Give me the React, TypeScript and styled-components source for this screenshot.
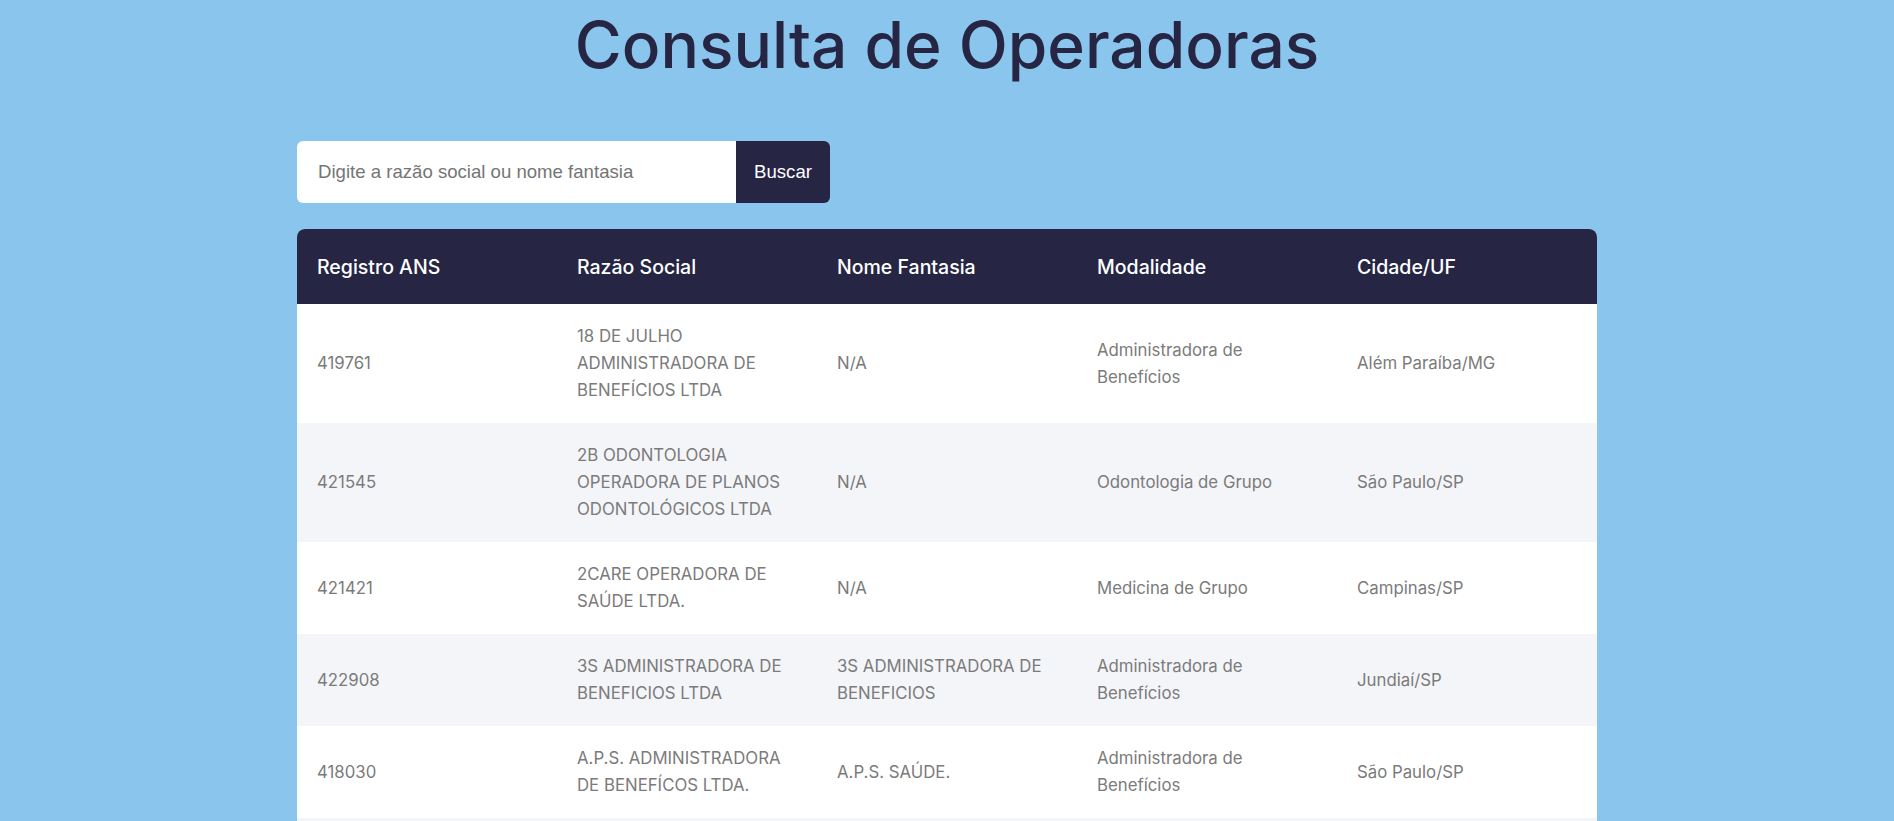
import React from "react";
import styled, { createGlobalStyle } from "styled-components";

const GlobalStyle = createGlobalStyle`
  html, body {
    margin: 0;
    padding: 0;
    background: #89c5ec;
    font-family: Inter, "Open Sans", sans-serif;
  }
  * { box-sizing: border-box; }
`;

const Page = styled.main`
  min-height: 100vh;
  background: #89c5ec;
  display: flex;
  flex-direction: column;
  align-items: center;
  padding-top: 7px;
`;

const Container = styled.div`
  width: 1300px;
  display: flex;
  flex-direction: column;
`;

const Title = styled.h1`
  margin: 0;
  text-align: center;
  font-family: Inter, sans-serif;
  font-weight: 500;
  font-size: 64px;
  line-height: 76px;
  color: #262644;
`;

const SearchForm = styled.form`
  display: flex;
  margin-top: 58px;
  width: 533px;
  height: 62px;
`;

const SearchInput = styled.input`
  flex: 1;
  border: none;
  outline: none;
  background: #ffffff;
  border-radius: 6px 0 0 6px;
  padding: 0 21px;
  font-family: "Liberation Sans", Arial, sans-serif;
  font-size: 18.6px;
  color: #333;
  &::placeholder { color: #757575; }
`;

const SearchButton = styled.button`
  width: 94px;
  border: none;
  background: #262644;
  color: #ffffff;
  border-radius: 0 6px 6px 0;
  font-family: "Liberation Sans", Arial, sans-serif;
  font-size: 18.6px;
  cursor: pointer;
`;

const Table = styled.table`
  margin-top: 26px;
  width: 100%;
  table-layout: fixed;
  border-collapse: separate;
  border-spacing: 0;
  border-radius: 8px;
  overflow: hidden;
  background: #ffffff;
`;

const HeadCell = styled.th`
  background: #262644;
  color: #ffffff;
  text-align: left;
  font-family: Inter, sans-serif;
  font-weight: 500;
  font-size: 19.5px;
  height: 75px;
  padding: 0 20px;
`;

const Row = styled.tr<{ $alt: boolean }>`
  background: ${(p) => (p.$alt ? "#f4f5f9" : "#ffffff")};
`;

const Cell = styled.td`
  padding: 19px 20px;
  color: #7b7b7b;
  font-family: Inter, sans-serif;
  font-size: 16.8px;
  line-height: 27px;
  vertical-align: middle;
`;

type Operadora = {
  registro: string;
  razao: string;
  fantasia: string;
  modalidade: string;
  cidade: string;
};

const data: Operadora[] = [
  {
    registro: "419761",
    razao: "18 DE JULHO ADMINISTRADORA DE BENEFÍCIOS LTDA",
    fantasia: "N/A",
    modalidade: "Administradora de Benefícios",
    cidade: "Além Paraíba/MG",
  },
  {
    registro: "421545",
    razao: "2B ODONTOLOGIA OPERADORA DE PLANOS ODONTOLÓGICOS LTDA",
    fantasia: "N/A",
    modalidade: "Odontologia de Grupo",
    cidade: "São Paulo/SP",
  },
  {
    registro: "421421",
    razao: "2CARE OPERADORA DE SAÚDE LTDA.",
    fantasia: "N/A",
    modalidade: "Medicina de Grupo",
    cidade: "Campinas/SP",
  },
  {
    registro: "422908",
    razao: "3S ADMINISTRADORA DE BENEFICIOS LTDA",
    fantasia: "3S ADMINISTRADORA DE BENEFICIOS",
    modalidade: "Administradora de Benefícios",
    cidade: "Jundiaí/SP",
  },
  {
    registro: "418030",
    razao: "A.P.S. ADMINISTRADORA DE BENEFÍCOS LTDA.",
    fantasia: "A.P.S. SAÚDE.",
    modalidade: "Administradora de Benefícios",
    cidade: "São Paulo/SP",
  },
  {
    registro: "416401",
    razao: "ABET - ASSOCIAÇÃO BENEFICENTE DOS EMPREGADOS EM TELECOMUNICAÇÕES",
    fantasia: "ABET",
    modalidade: "Autogestão",
    cidade: "Rio de Janeiro/RJ",
  },
];

const headers = ["Registro ANS", "Razão Social", "Nome Fantasia", "Modalidade", "Cidade/UF"];

export default function App() {
  return (
    <>
      <GlobalStyle />
      <Page>
        <Container>
          <Title>Consulta de Operadoras</Title>
          <SearchForm onSubmit={(e) => e.preventDefault()}>
            <SearchInput type="text" placeholder="Digite a razão social ou nome fantasia" />
            <SearchButton type="submit">Buscar</SearchButton>
          </SearchForm>
          <Table>
            <thead>
              <tr>
                {headers.map((h) => (
                  <HeadCell key={h}>{h}</HeadCell>
                ))}
              </tr>
            </thead>
            <tbody>
              {data.map((op, i) => (
                <Row key={op.registro} $alt={i % 2 === 1}>
                  <Cell>{op.registro}</Cell>
                  <Cell>{op.razao}</Cell>
                  <Cell>{op.fantasia}</Cell>
                  <Cell>{op.modalidade}</Cell>
                  <Cell>{op.cidade}</Cell>
                </Row>
              ))}
            </tbody>
          </Table>
        </Container>
      </Page>
    </>
  );
}
